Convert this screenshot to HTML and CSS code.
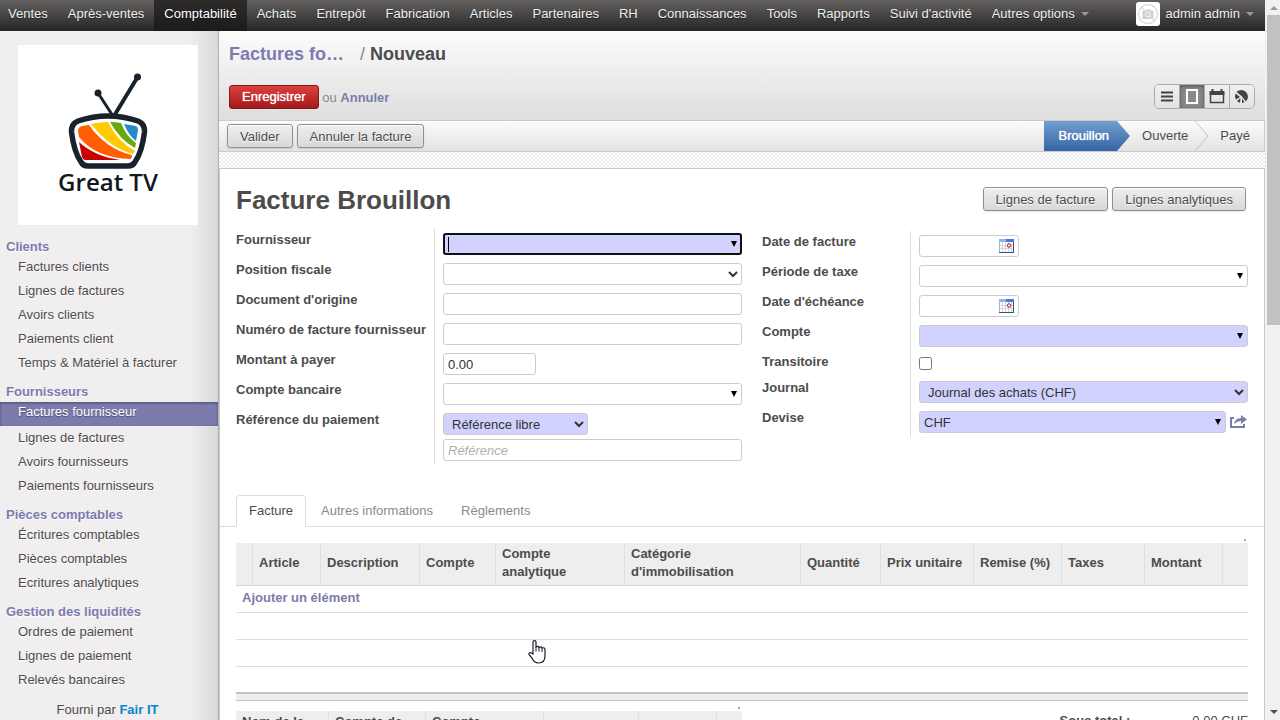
FILE: index.html
```html
<!DOCTYPE html>
<html lang="fr">

<head>
    <meta charset="UTF-8">
    <meta name="viewport" content="width=device-width, initial-scale=1.0">
    <title>Nouveau - Factures fournisseur</title>
    <link rel="stylesheet" href="styles.css">
</head>

<body>
    <div class="client">
        <!-- Menu principal -->
        <nav class="topbar">
            <ul class="menu">
                <li><a href="#">Ventes</a></li>
                <li><a href="#">Après-ventes</a></li>
                <li class="active"><a href="#">Comptabilité</a></li>
                <li><a href="#">Achats</a></li>
                <li><a href="#">Entrepôt</a></li>
                <li><a href="#">Fabrication</a></li>
                <li><a href="#">Articles</a></li>
                <li><a href="#">Partenaires</a></li>
                <li><a href="#">RH</a></li>
                <li><a href="#">Connaissances</a></li>
                <li><a href="#">Tools</a></li>
                <li><a href="#">Rapports</a></li>
                <li><a href="#">Suivi d'activité</a></li>
                <li><a href="#">Autres options <span class="caret"></span></a></li>
            </ul>
            <a href="#" class="user">
                <svg class="avatar" width="24" height="24" viewBox="0 0 24 24">
                    <rect width="24" height="24" rx="3" fill="#fff" />
                    <circle cx="12" cy="12" r="9.5" fill="none" stroke="#dedede" stroke-width="1.5" />
                    <path d="M6.500 9h3l1-1.500h4L15.500 9h2v8h-11z" fill="#cfcfcf" />
                    <circle cx="12" cy="12.500" r="2.500" fill="none" stroke="#fff" />
                    <path d="M5.500 5.500l13 13" stroke="#dedede" stroke-width="1.500" />
                </svg>
                admin admin <span class="caret"></span>
            </a>
        </nav>

        <div class="main">
            <!-- Menu secondaire -->
            <aside class="sidebar">
                <a href="#" class="logo">
                    <svg width="180" height="180" viewBox="0 0 180 180">
                        <rect width="180" height="180" fill="#fff" />
                        <g stroke="#18222c" stroke-linecap="round">
                            <path d="M80 48L95 71" stroke-width="3" />
                            <path d="M119 33L96 71" stroke-width="4" />
                        </g>
                        <circle cx="80" cy="48" r="3.500" fill="#18222c" />
                        <circle cx="119.500" cy="32" r="3.500" fill="#18222c" />
                        <path d="M60 76Q90 66 120 76Q127 79 126.500 87Q124 107 117 117Q115 121 110 121H70Q65 121 63 117Q56 107 53.500 87Q53 79 60 76Z" fill="#fff" stroke="#18222c" stroke-width="5.500" stroke-linejoin="round" />
                        <path d="M61 97Q76 111 102 115H67Q65 115 64 112Z" fill="#c90000" />
                        <path d="M60 86Q60 82 64 81L71 80Q88 104 114 110Q114 114 112 114Q78 113 61 92Z" fill="#ff5f00" />
                        <path d="M73 79Q82 77 90 77Q100 97 117 106L115 109Q93 104 73 79Z" fill="#ffc905" />
                        <path d="M92 77Q98 77 103 78Q108 91 118 98L117 103Q102 95 92 77Z" fill="#68a90f" />
                        <path d="M106 79L118 81Q120 82 120 85L118 96Q111 91 106 79Z" fill="#228bc9" />
                        <text x="90" y="146" class="logo-text">Great TV</text>
                    </svg>
                </a>
                <div class="section">
                    <h4>Clients</h4>
                    <ul>
                        <li><a href="#">Factures clients</a></li>
                        <li><a href="#">Lignes de factures</a></li>
                        <li><a href="#">Avoirs clients</a></li>
                        <li><a href="#">Paiements client</a></li>
                        <li><a href="#">Temps &amp; Matériel à facturer</a></li>
                    </ul>
                </div>
                <div class="section">
                    <h4>Fournisseurs</h4>
                    <ul>
                        <li class="active"><a href="#">Factures fournisseur</a></li>
                        <li><a href="#">Lignes de factures</a></li>
                        <li><a href="#">Avoirs fournisseurs</a></li>
                        <li><a href="#">Paiements fournisseurs</a></li>
                    </ul>
                </div>
                <div class="section">
                    <h4>Pièces comptables</h4>
                    <ul>
                        <li><a href="#">Écritures comptables</a></li>
                        <li><a href="#">Pièces comptables</a></li>
                        <li><a href="#">Ecritures analytiques</a></li>
                    </ul>
                </div>
                <div class="section">
                    <h4>Gestion des liquidités</h4>
                    <ul>
                        <li><a href="#">Ordres de paiement</a></li>
                        <li><a href="#">Lignes de paiement</a></li>
                        <li><a href="#">Relevés bancaires</a></li>
                    </ul>
                </div>
                <div class="powered">Fourni par <a href="#">Fair IT</a></div>
            </aside>

            <div class="content">
                <!-- Fil d'Ariane et actions -->
                <header class="control-panel">
                    <h2 class="breadcrumb">
                        <a href="#">Factures fo…</a><span class="sep">/</span><span>Nouveau</span>
                    </h2>
                    <div class="actions">
                        <div>
                            <button type="button" class="btn-save">Enregistrer</button>
                            <span class="or">ou</span> <a href="#" class="link">Annuler</a>
                        </div>
                        <div class="switcher">
                            <button type="button" aria-label="Liste">
                                <svg width="24" height="23" viewBox="0 0 24 23"><path d="M6 7.500h12M6 11.500h12M6 15.500h12" stroke="#444" stroke-width="2" /></svg>
                            </button>
                            <button type="button" aria-label="Formulaire" class="active">
                                <svg width="24" height="23" viewBox="0 0 24 23"><rect x="7" y="5" width="10" height="13" fill="none" stroke="#fff" stroke-width="2" /></svg>
                            </button>
                            <button type="button" aria-label="Calendrier">
                                <svg width="24" height="23" viewBox="0 0 24 23"><path d="M5.500 9V17.500h13V9" fill="none" stroke="#444" stroke-width="1.500" /><path d="M4.500 6h15v4h-15zM6.500 4h2v3h-2zM15.500 4h2v3h-2z" fill="#444" /></svg>
                            </button>
                            <button type="button" aria-label="Graphique">
                                <svg width="24" height="23" viewBox="0 0 24 23"><path d="M11.500 11L6.500 7A6.500 6.500 0 1 1 16 16.500Z" fill="#444" /><path d="M10 12L5.500 8.500A6.500 6.500 0 0 0 6 14.500ZM10.500 13L7 16A6.500 6.500 0 0 0 10 17.800ZM12 13.500V18L14.500 17.300Z" fill="#444" /></svg>
                            </button>
                        </div>
                    </div>
                </header>

                <div class="statusbar">
                    <div class="buttons">
                        <button type="button" class="btn">Valider</button>
                        <button type="button" class="btn">Annuler la facture</button>
                    </div>
                    <ul class="status">
                        <li class="active">Brouillon</li>
                        <li class="arrow"><svg width="14" height="30" viewBox="0 0 14 30"><defs><linearGradient id="blue" x1="0" y1="0" x2="0" y2="1"><stop offset="0" stop-color="#729fcf" /><stop offset="1" stop-color="#3465a4" /></linearGradient></defs><path d="M0 0L13 15L0 30Z" fill="url(#blue)" /></svg></li>
                        <li>Ouverte</li>
                        <li class="arrow"><svg width="14" height="30" viewBox="0 0 14 30"><path d="M0 0L13 15L0 30" fill="none" stroke="#c2c2c6" /></svg></li>
                        <li>Payé</li>
                    </ul>
                </div>

                <form class="sheet">
                    <div class="sheet-head">
                        <h1>Facture Brouillon</h1>
                        <div class="buttons">
                            <button type="button" class="btn">Lignes de facture</button>
                            <button type="button" class="btn">Lignes analytiques</button>
                        </div>
                    </div>

                    <div class="groups">
                        <div class="group group-left">
                            <div class="row">
                                <label for="supplier">Fournisseur</label>
                                <div class="cell">
                                    <div class="combo">
                                        <input type="text" id="supplier" class="required focused">
                                        <span class="text-cursor"></span>
                                        <button type="button" aria-label="Ouvrir"></button>
                                    </div>
                                </div>
                            </div>
                            <div class="row">
                                <label for="fiscal">Position fiscale</label>
                                <div class="cell"><select id="fiscal"><option></option></select></div>
                            </div>
                            <div class="row">
                                <label for="origin">Document d'origine</label>
                                <div class="cell"><input type="text" id="origin"></div>
                            </div>
                            <div class="row">
                                <label for="number">Numéro de facture fournisseur</label>
                                <div class="cell"><input type="text" id="number"></div>
                            </div>
                            <div class="row">
                                <label for="amount">Montant à payer</label>
                                <div class="cell"><input type="text" id="amount" class="short" value="0.00"></div>
                            </div>
                            <div class="row">
                                <label for="bank">Compte bancaire</label>
                                <div class="cell">
                                    <div class="combo">
                                        <input type="text" id="bank">
                                        <button type="button" aria-label="Ouvrir"></button>
                                    </div>
                                </div>
                            </div>
                            <div class="row">
                                <label for="reftype">Référence du paiement</label>
                                <div class="cell">
                                    <select id="reftype" class="required medium"><option>Référence libre</option></select>
                                    <input type="text" placeholder="Référence" aria-label="Référence">
                                </div>
                            </div>
                        </div>

                        <div class="group group-right">
                            <div class="row">
                                <label for="date">Date de facture</label>
                                <div class="cell">
                                    <div class="date">
                                        <input type="text" id="date">
                                        <button type="button" aria-label="Calendrier">
                                            <svg width="16" height="15" viewBox="0 0 16 15"><rect x="0.500" y="0.500" width="14" height="13" fill="#fff" stroke="#9db5dc" /><path d="M0 0h7v3H0z" fill="#8fb4ee" /><path d="M7 0h8v3H7z" fill="#3f7de0" /><path d="M1 6.500h13M1 9.500h13M3.500 3v10M6.500 3v10M9.500 3v10M12.500 3v10" stroke="#d5d5d5" /><path d="M14.500 3v11M0 13.500h15" stroke="#38507c" /><circle cx="10" cy="6.500" r="1.700" fill="#fff" stroke="#a01010" /></svg>
                                        </button>
                                    </div>
                                </div>
                            </div>
                            <div class="row">
                                <label for="period">Période de taxe</label>
                                <div class="cell">
                                    <div class="combo">
                                        <input type="text" id="period">
                                        <button type="button" aria-label="Ouvrir"></button>
                                    </div>
                                </div>
                            </div>
                            <div class="row">
                                <label for="due">Date d'échéance</label>
                                <div class="cell">
                                    <div class="date">
                                        <input type="text" id="due">
                                        <button type="button" aria-label="Calendrier">
                                            <svg width="16" height="15" viewBox="0 0 16 15"><rect x="0.500" y="0.500" width="14" height="13" fill="#fff" stroke="#9db5dc" /><path d="M0 0h7v3H0z" fill="#8fb4ee" /><path d="M7 0h8v3H7z" fill="#3f7de0" /><path d="M1 6.500h13M1 9.500h13M3.500 3v10M6.500 3v10M9.500 3v10M12.500 3v10" stroke="#d5d5d5" /><path d="M14.500 3v11M0 13.500h15" stroke="#38507c" /><circle cx="10" cy="6.500" r="1.700" fill="#fff" stroke="#a01010" /></svg>
                                        </button>
                                    </div>
                                </div>
                            </div>
                            <div class="row">
                                <label for="account">Compte</label>
                                <div class="cell">
                                    <div class="combo">
                                        <input type="text" id="account" class="required">
                                        <button type="button" aria-label="Ouvrir"></button>
                                    </div>
                                </div>
                            </div>
                            <div class="row">
                                <label for="transitory">Transitoire</label>
                                <div class="cell cell-check"><input type="checkbox" id="transitory"></div>
                            </div>
                            <div class="row">
                                <label for="journal">Journal</label>
                                <div class="cell"><select id="journal" class="required"><option>Journal des achats (CHF)</option></select></div>
                            </div>
                            <div class="row">
                                <label for="currency">Devise</label>
                                <div class="cell cell-link">
                                    <div class="combo">
                                        <input type="text" id="currency" class="required" value="CHF">
                                        <button type="button" aria-label="Ouvrir"></button>
                                    </div>
                                    <a href="#" class="open" aria-label="Ouvrir la ressource">
                                        <svg width="18" height="14" viewBox="0 0 18 14"><path d="M4 3H1V12H14V9" fill="none" stroke="#7c7bad" stroke-width="2" /><path d="M4 9Q5 3 11 3V0L17 4.500L11 9V6Q7 6 4 9Z" fill="#7c7bad" /></svg>
                                    </a>
                                </div>
                            </div>
                        </div>
                    </div>

                    <!-- Onglets -->
                    <ul class="tabs">
                        <li class="active"><a href="#">Facture</a></li>
                        <li><a href="#">Autres informations</a></li>
                        <li><a href="#">Règlements</a></li>
                    </ul>

                    <div class="list">
                        <span class="dot"></span>
                        <table class="lines">
                            <thead>
                                <tr>
                                    <th class="c-handle"></th>
                                    <th class="c-article">Article</th>
                                    <th class="c-desc">Description</th>
                                    <th class="c-account">Compte</th>
                                    <th class="c-analytic">Compte analytique</th>
                                    <th>Catégorie<br>d'immobilisation</th>
                                    <th class="c-qty">Quantité</th>
                                    <th class="c-price">Prix unitaire</th>
                                    <th class="c-discount">Remise (%)</th>
                                    <th class="c-taxes">Taxes</th>
                                    <th class="c-amount">Montant</th>
                                    <th class="c-delete"></th>
                                </tr>
                            </thead>
                            <tbody>
                                <tr><td colspan="12"><a href="#" class="link">Ajouter un élément</a></td></tr>
                                <tr><td colspan="12"></td></tr>
                                <tr><td colspan="12"></td></tr>
                                <tr><td colspan="12"></td></tr>
                            </tbody>
                            <tfoot>
                                <tr><td colspan="12"></td></tr>
                            </tfoot>
                        </table>
                    </div>

                    <div class="bottom">
                        <div class="list list-taxes">
                            <span class="dot"></span>
                            <table class="taxes">
                                <thead>
                                    <tr>
                                        <th class="t-name">Nom de la taxe</th>
                                        <th class="t-account">Compte de taxe</th>
                                        <th>Compte analytique</th>
                                        <th class="t-base">Base légale</th>
                                        <th class="t-amount"></th>
                                        <th class="c-delete"></th>
                                    </tr>
                                </thead>
                            </table>
                        </div>
                        <dl class="totals">
                            <dt>Sous total :</dt>
                            <dd>0.00 CHF</dd>
                        </dl>
                    </div>
                </form>
            </div>
        </div>
    </div>

    <!-- Barre de défilement -->
    <div class="scrollbar">
        <span class="scroll-up"></span>
        <div class="thumb"></div>
        <span class="scroll-down"></span>
    </div>

    <svg class="pointer" width="18" height="24" viewBox="0 0 18 24">
        <path d="M5 14V2Q5 0.700 6.500 0.700Q8 0.700 8 2V7Q10.500 5.500 11 7.500Q13.500 6 14 8Q17 7 17 10V16Q17 23 10.500 23Q6 23 4 18L1 14.500Q0.500 12.500 2.500 12.500Z" fill="#fff" stroke="#1b1b2b" stroke-width="1.200" />
        <path d="M8 7v4.500M11 7.500v4M14 8v4" stroke="#1b1b2b" />
    </svg>
</body>

</html>
```

FILE: styles.css
```css
* {
    box-sizing: border-box;
}

body {
    display: flex;
    height: 100vh;
    margin: 0;
    overflow: hidden;
    background: #f0eeee;
    color: #4c4c4c;
    font-family: "Liberation Sans", Arial, sans-serif;
    font-size: 13px;
}

ul,
dl,
dd,
h1,
h2,
h4 {
    margin: 0;
    padding: 0;
    list-style: none;
}

a {
    color: inherit;
    text-decoration: none;
}

button,
input,
select {
    font-family: inherit;
    font-size: 13px;
}

.client {
    flex: 1;
    display: flex;
    flex-direction: column;
    min-width: 0;
}

/* Menu principal */
.topbar {
    display: flex;
    justify-content: space-between;
    flex: none;
    height: 31px;
    background: linear-gradient(#646060, #262626);
    color: #eee;
    line-height: 28px;
    text-shadow: 0 1px 1px rgba(0, 0, 0, 0.4);
}

.menu {
    display: flex;
    white-space: nowrap;
}

.menu li {
    padding: 0 10px;
}

.menu li:first-child {
    padding-left: 8px;
}

.menu .active {
    background: linear-gradient(#2e2b2b, #1b1b1b);
    color: #fff;
}

.caret {
    display: inline-block;
    margin: 0 0 2px 3px;
    border: 4px solid transparent;
    border-top-color: #9a9a9a;
    border-bottom: 0;
}

.user {
    display: flex;
    align-items: center;
    height: 28px;
    padding-right: 11px;
    white-space: nowrap;
}

.user .caret {
    margin: 0 0 0 6px;
}

.avatar {
    margin-right: 6px;
}

.main {
    flex: 1;
    display: flex;
    min-height: 0;
}

/* Menu secondaire */
.sidebar {
    flex: none;
    width: 219px;
    overflow: hidden;
    border-right: 1px solid #afafb6;
    background: linear-gradient(to right, #f0eeee 190px, #d8d8d8);
}

.logo {
    display: block;
    height: 180px;
    margin: 14px 18px;
}

.logo-text {
    fill: #101820;
    font: 600 24px "Open Sans", sans-serif;
    text-anchor: middle;
}

.section {
    margin-bottom: 9px;
    text-shadow: 0 1px 1px #fff;
}

.section h4 {
    padding-left: 6px;
    color: #7c7bad;
    font-size: 13px;
    line-height: 16px;
}

.section li {
    padding-left: 18px;
    line-height: 24px;
}

.section .active {
    margin-top: 2px;
    padding-bottom: 3px;
    background: #7c7bad;
    box-shadow: inset 0 1px 3px rgba(0, 0, 0, 0.4);
    color: #fff;
    line-height: 20px;
    padding-bottom: 4px;
    text-shadow: 0 1px 1px rgba(0, 0, 0, 0.4);
}

.powered {
    padding-right: 3px;
    line-height: 18px;
    text-align: center;
}

.powered a {
    color: #0b84cf;
    font-weight: bold;
}

.content {
    flex: 1;
    display: flex;
    flex-direction: column;
    min-width: 0;
    background: conic-gradient(#ebebeb 25%, #fff 0 50%, #ebebeb 0 75%, #fff 0) 0 0 / 4px 4px;
}

/* En-tête */
.control-panel {
    padding: 12px 10px 11px;
    border-bottom: 1px solid #cacaca;
    background: linear-gradient(#fcfcfc, #dedede);
}

.breadcrumb {
    font-size: 18px;
    line-height: 22px;
}

.breadcrumb a,
.link {
    color: #7c7bad;
    font-weight: bold;
}

.sep {
    margin: 0 5px 0 16px;
    color: #8a8a8a;
    font-weight: normal;
}

.actions {
    display: flex;
    align-items: center;
    justify-content: space-between;
    height: 25px;
    margin-top: 19px;
}

.or {
    color: #8a8a8a;
}

.btn,
.btn-save {
    height: 24px;
    padding: 0 12px;
    border: 1px solid #8f8f8f;
    border-radius: 3px;
    background: linear-gradient(#efefef, #d8d8d8);
    box-shadow: 0 1px 2px rgba(0, 0, 0, 0.1), inset 0 1px 1px #fff;
    color: #4c4c4c;
    text-shadow: 0 1px 1px #fff;
}

.btn-save {
    border-color: #80191a;
    background: linear-gradient(#df3f3f, #a21a1a);
    box-shadow: none;
    color: #fff;
    text-shadow: 0 0 1px #fff;
}

.switcher {
    display: flex;
    overflow: hidden;
    border: 1px solid #ababab;
    border-radius: 5px;
}

.switcher button {
    width: 25px;
    height: 23px;
    padding: 0;
    border: 0;
    border-right: 1px solid #ababab;
    background: linear-gradient(#f0f0f0, #e2e2e2);
}

.switcher button:last-child {
    width: 24px;
    border-right: 0;
}

.switcher .active {
    background: #8a8a8a;
    box-shadow: inset 0 1px 4px rgba(0, 0, 0, 0.4);
}

.switcher svg {
    display: block;
}

/* Barre de statut */
.statusbar {
    display: flex;
    justify-content: space-between;
    height: 31px;
    border-right: 1px solid #cacaca;
    border-bottom: 1px solid #cacaca;
    background: linear-gradient(#fcfcfc, #e2e2e2);
}

.buttons {
    display: flex;
    gap: 4px;
}

.statusbar .buttons {
    align-items: center;
    padding-left: 8px;
}

.status {
    display: flex;
    line-height: 30px;
}

.status li {
    padding: 0 7px 0 11px;
}

.status li:last-child {
    padding-right: 14px;
}

.status .arrow {
    padding: 0;
}

.status .arrow svg {
    display: block;
}

.status .active {
    padding: 0 8px 0 15px;
    background: linear-gradient(#729fcf, #3465a4);
    color: #fff;
    text-shadow: 0 0 1px #fff;
}

/* Formulaire */
.sheet {
    flex: 1;
    margin-top: 16px;
    padding: 18px 16px 0;
    border: 1px solid #c8c8d3;
    border-bottom: 0;
    background: #fff;
}

.sheet-head {
    display: flex;
    justify-content: space-between;
    padding-right: 2px;
}

h1 {
    font-size: 26px;
    line-height: 26px;
}

.groups {
    display: grid;
    grid-template-columns: 506fr 486fr;
    gap: 20px;
    margin-top: 16px;
}

.group-right {
    padding-top: 2px;
}

.row {
    display: flex;
}

.row label {
    flex: none;
    width: 198px;
    font-weight: bold;
    line-height: 22px;
    white-space: nowrap;
}

.group-right label {
    width: 148px;
}

.cell {
    flex: 1;
    display: flex;
    flex-direction: column;
    gap: 4px;
    padding: 4px 0 4px 8px;
    border-left: 1px solid #ddd;
}

.cell-link {
    flex-direction: row;
}

.cell-check {
    height: 26px;
    padding-top: 6px;
}

.cell input[type="checkbox"] {
    width: 13px;
    height: 13px;
    margin: 0;
}

.cell input[type="text"],
.cell select {
    width: 100%;
    height: 22px;
    padding: 0 4px;
    border: 1px solid #ccc;
    border-radius: 3px;
    background-color: #fff;
    color: #333;
}

.cell ::placeholder {
    color: #afafb6;
    font-style: italic;
}

.cell .required,
.cell .required[type="text"] {
    background-color: #d2d2ff;
}

.cell .focused {
    outline: 2px solid #101010;
    outline-offset: -2px;
}

.cell input.short {
    width: 93px;
}

.cell select.medium {
    width: 145px;
}

.combo,
.date {
    flex: 1;
    display: flex;
    position: relative;
}

.date {
    width: 100px;
}

.combo button,
.date button {
    position: absolute;
    padding: 0;
    border: 0;
    background: none;
}

/* Petit triangle noir des listes */
.combo button {
    top: 8px;
    right: 5px;
    border: 3px solid transparent;
    border-top: 6px solid #000;
    border-bottom: 0;
}

.date button {
    top: 4px;
    right: 4px;
    height: 15px;
}

.date svg {
    display: block;
}

.text-cursor {
    position: absolute;
    top: 4px;
    left: 5px;
    width: 1px;
    height: 15px;
    background: #000;
}

.open {
    width: 18px;
    padding-top: 4px;
}

/* Onglets */
.tabs {
    display: flex;
    height: 32px;
    margin: 30px -16px 0;
    padding-left: 16px;
    border-bottom: 1px solid #ddd;
}

.tabs li {
    height: 32px;
    padding: 0 12px;
    border: 1px solid transparent;
    margin-right: 2px;
    color: #8a8a8a;
    line-height: 29px;
}

.tabs .active {
    border-color: #ddd;
    border-bottom-color: #fff;
    border-radius: 4px 4px 0 0;
    background: #fff;
    color: #4c4c4c;
}

/* Listes */
.list {
    position: relative;
    margin-top: 16px;
}

.dot {
    position: absolute;
    top: -4px;
    right: 2px;
    width: 2px;
    height: 2px;
    background: #aaa;
}

table {
    width: 100%;
    border-collapse: separate;
    border-spacing: 0;
    table-layout: fixed;
}

th {
    height: 43px;
    padding: 1px 6px 3px;
    border-left: 1px solid #dfdfdf;
    border-bottom: 1px solid #d5d5d5;
    background: #eee;
    line-height: 18px;
    text-align: left;
}

th:first-child {
    border-left: 0;
}

.lines td {
    height: 27px;
    padding: 0 6px 3px;
    border-bottom: 1px solid #ddd;
}

.lines tbody tr:last-child td {
    height: 25px;
    border-bottom: 0;
}

.lines tfoot td {
    height: 9px;
    padding: 0;
    border-top: 2px solid #c4c4c4;
    border-bottom: 1px solid #c4c4c4;
    background: #eee;
}

.c-handle {
    width: 16px;
}

.c-article {
    width: 68px;
}

.c-desc {
    width: 99px;
}

.c-account {
    width: 76px;
}

.c-analytic {
    width: 129px;
}

.c-qty {
    width: 80px;
}

.c-price {
    width: 93px;
}

.c-discount {
    width: 88px;
}

.c-taxes {
    width: 83px;
}

.c-amount {
    width: 78px;
}

.c-delete {
    width: 26px;
}

.bottom {
    display: flex;
    justify-content: space-between;
}

.list-taxes {
    width: 50%;
    margin-top: 10px;
}

.t-name {
    width: 92px;
}

.t-account {
    width: 97px;
}

.t-base {
    width: 95px;
}

.t-amount {
    width: 78px;
}

.totals {
    display: flex;
    gap: 62px;
    margin-top: 12px;
    line-height: 16px;
}

.totals dt {
    font-weight: bold;
}

/* Barre de défilement */
.scrollbar {
    display: flex;
    flex-direction: column;
    align-items: center;
    flex: none;
    width: 15px;
    padding-left: 2px;
    background: #f1f1f1;
}

.thumb {
    width: 100%;
    height: 43%;
    margin: 5px 0 auto;
    background: #c1c1c1;
}

.scroll-up,
.scroll-down {
    border: 4px solid transparent;
}

.scroll-up {
    margin-top: 6px;
    border-top: 0;
    border-bottom-color: #999;
}

.scroll-down {
    margin-bottom: 6px;
    border-top-color: #505050;
    border-bottom: 0;
}

.pointer {
    position: absolute;
    top: 640px;
    left: 528px;
}
```
